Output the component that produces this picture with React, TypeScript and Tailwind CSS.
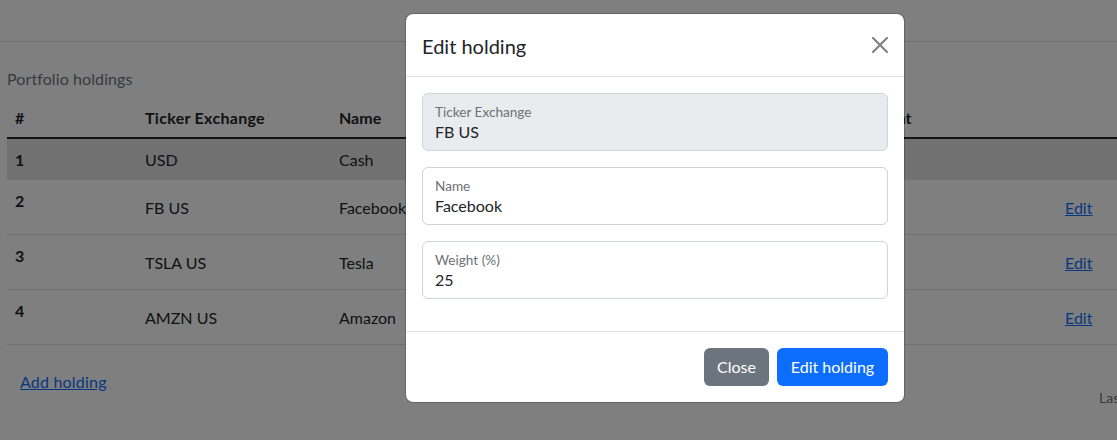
import React from "react";

const rows = [
  { n: "1", t: "USD", name: "Cash", w: "25", a: "", edit: false },
  { n: "2", t: "FB US", name: "Facebook", w: "25", a: "", edit: true },
  { n: "3", t: "TSLA US", name: "Tesla", w: "25", a: "", edit: true },
  { n: "4", t: "AMZN US", name: "Amazon", w: "25", a: "", edit: true },
];

function Field({ label, value, readOnly }: { label: string; value: string; readOnly?: boolean }) {
  return (
    <div
      className={
        "h-[58px] rounded-[6px] border border-[#ced4da] px-3 pt-[8px] mb-4 " +
        (readOnly ? "bg-[#e9ecef]" : "bg-white")
      }
    >
      <div className="text-[13.6px] leading-[20px] text-[#6e7174]">{label}</div>
      <div className="text-[16px] leading-[24px] -mt-[2px] text-[#212529]">{value}</div>
    </div>
  );
}

export default function App() {
  return (
    <div
      className="relative w-[1117px] h-[440px] overflow-hidden bg-white text-[#212529]"
      style={{ fontFamily: '"Segoe UI", Lato, "Noto Sans", sans-serif' }}
    >
      <div className="w-[1310px]">
        <div className="h-[42px] border-b border-[#dcdcdc] bg-white" />
        <div className="px-[7px] pt-[17px]">
          <div className="pt-2 pb-[6px] text-[16px] leading-6 text-[#6c757d] tracking-[0.1px]">Portfolio holdings</div>
          <table className="table-fixed border-collapse w-[1296px] text-[16px] leading-6">
            <colgroup>
              <col className="w-[130px]" />
              <col className="w-[194px]" />
              <col className="w-[269px]" />
              <col className="w-[246px]" />
              <col className="w-[199px]" />
              <col className="w-[258px]" />
            </colgroup>
            <thead>
              <tr className="border-b-2 border-[#212529]">
                <th className="px-2 pt-[9px] pb-[7px] text-left font-bold">#</th>
                <th className="px-2 pt-[9px] pb-[7px] text-left font-bold tracking-[0.3px]">Ticker Exchange</th>
                <th className="px-2 pt-[9px] pb-[7px] text-left font-bold">Name</th>
                <th className="px-2 pt-[9px] pb-[7px] text-left font-bold">Weight (%)</th>
                <th className="px-2 pt-[9px] pb-[7px] text-left font-bold">Amount</th>
                <th className="px-2 pt-[9px] pb-[7px] text-left font-bold"></th>
              </tr>
            </thead>
            <tbody>
              {rows.map((r) => (
                <tr key={r.n} className={"border-b border-[#dee2e6] " + (r.n === "1" ? "bg-[#e2e3e5]" : "")}>
                  <th className="px-2 pt-[9px] pb-[7px] text-left font-bold align-top">{r.n}</th>
                  <td className="px-2 pt-[9px] pb-[7px] align-middle">{r.t}</td>
                  <td className="px-2 pt-[9px] pb-[7px] align-middle">{r.name}</td>
                  <td className="px-2 pt-[9px] pb-[7px] align-middle">{r.w}</td>
                  <td className="px-2 pt-[9px] pb-[7px] align-middle">{r.a}</td>
                  <td className="px-2 pt-[8px] pb-[8px] align-middle">
                    {r.edit ? (
                      <span className="inline-block px-3 pt-[8px] pb-[6px] leading-6 text-[#0d6efd] underline">Edit</span>
                    ) : null}
                  </td>
                </tr>
              ))}
            </tbody>
          </table>
          <div className="flex items-start mt-[17px]">
            <div className="w-[1092px] shrink-0">
              <span className="inline-block ml-px px-3 pt-[8px] pb-[6px] leading-6 text-[16px] text-[#0d6efd] underline tracking-[0.2px]">
                Add holding
              </span>
            </div>
            <div className="mt-[25px] text-[14px] leading-[21px] text-[#6c757d] whitespace-nowrap">
              Last updated
            </div>
          </div>
        </div>
      </div>

      <div className="absolute inset-0 bg-black/50" />

      <div className="absolute left-[405px] top-[13px] w-[500px] rounded-[8px] border border-black/20 bg-white bg-clip-padding">
        <div className="flex items-center justify-between p-4 border-b border-[#dee2e6]">
          <div className="relative top-px text-[20px] leading-[30px] text-[#212529]">Edit holding</div>
          <svg width="16" height="16" viewBox="0 0 16 16" className="opacity-50">
            <path
              fill="#000"
              d="M.293.293a1 1 0 0 1 1.414 0L8 6.586 14.293.293a1 1 0 1 1 1.414 1.414L9.414 8l6.293 6.293a1 1 0 0 1-1.414 1.414L8 9.414l-6.293 6.293a1 1 0 0 1-1.414-1.414L6.586 8 .293 1.707a1 1 0 0 1 0-1.414z"
            />
          </svg>
        </div>
        <div className="p-4 pb-0">
          <Field label="Ticker Exchange" value="FB US" readOnly />
          <Field label="Name" value="Facebook" />
          <Field label="Weight (%)" value="25" />
          <div className="h-4" />
        </div>
        <div className="flex justify-end items-center gap-2 px-4 py-4 border-t border-[#dee2e6]">
          <button className="h-[38px] w-[65px] rounded-[6px] bg-[#6c757d] text-white text-[16px] leading-6 text-center">Close</button>
          <button className="h-[38px] w-[111px] rounded-[6px] bg-[#0d6efd] text-white text-[16px] leading-6 text-center">Edit holding</button>
        </div>
      </div>
    </div>
  );
}
